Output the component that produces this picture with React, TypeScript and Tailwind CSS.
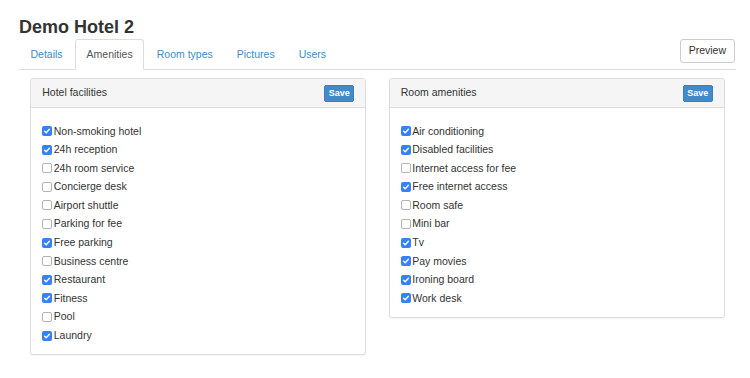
import React from "react";

type Item = { label: string; checked: boolean };

const hotelFacilities: Item[] = [
  { label: "Non-smoking hotel", checked: true },
  { label: "24h reception", checked: true },
  { label: "24h room service", checked: false },
  { label: "Concierge desk", checked: false },
  { label: "Airport shuttle", checked: false },
  { label: "Parking for fee", checked: false },
  { label: "Free parking", checked: true },
  { label: "Business centre", checked: false },
  { label: "Restaurant", checked: true },
  { label: "Fitness", checked: true },
  { label: "Pool", checked: false },
  { label: "Laundry", checked: true },
];

const roomAmenities: Item[] = [
  { label: "Air conditioning", checked: true },
  { label: "Disabled facilities", checked: true },
  { label: "Internet access for fee", checked: false },
  { label: "Free internet access", checked: true },
  { label: "Room safe", checked: false },
  { label: "Mini bar", checked: false },
  { label: "Tv", checked: true },
  { label: "Pay movies", checked: true },
  { label: "Ironing board", checked: true },
  { label: "Work desk", checked: true },
];

const tabs = ["Details", "Amenities", "Room types", "Pictures", "Users"];

function Box({ checked }: { checked: boolean }) {
  if (checked) {
    return (
      <span className="flex h-[10px] w-[10px] items-center justify-center rounded-[2px] bg-[#3382f6]">
        <svg width="8" height="8" viewBox="0 0 8 8" fill="none">
          <path d="M1.6 4.2 L3.2 5.8 L6.4 2.2" stroke="white" strokeWidth="1.4" strokeLinecap="round" strokeLinejoin="round" />
        </svg>
      </span>
    );
  }
  return <span className="h-[10px] w-[10px] rounded-[2px] border border-[#b4b4b4] bg-white" />;
}

function Panel({ title, items }: { title: string; items: Item[] }) {
  return (
    <div className="self-start rounded-[3px] border border-[#ddd] bg-white shadow-[0_1px_1px_rgba(0,0,0,0.05)]">
      <div className="flex h-[29px] items-center justify-between rounded-t-[3px] border-b border-[#ddd] bg-[#f5f5f5] pl-[11px] pr-[11px]">
        <span className="text-[10.5px] text-[#333]">{title}</span>
        <button className="h-[17px] rounded-[2px] border border-[#3a7fc0] bg-[#428bca] px-[3.5px] text-[9px] font-bold leading-[15px] text-white">
          Save
        </button>
      </div>
      <div className="flex flex-col gap-[3.6px] px-[11px] pb-[11px] pt-[15.5px]">
        {items.map((it) => (
          <label key={it.label} className="flex h-[15px] items-center gap-[1.5px] text-[10.5px] leading-[15px] text-[#333]">
            <Box checked={it.checked} />
            <span>{it.label}</span>
          </label>
        ))}
      </div>
    </div>
  );
}

export default function App() {
  return (
    <div className="min-h-screen bg-white pl-[19px] pr-[14px] font-['Liberation_Sans',Arial,sans-serif]">
      <h3 className="pt-[16.5px] text-[18px] font-bold leading-[20px] text-[#333]">Demo Hotel 2</h3>

      <div className="mt-[2.5px] flex border-b border-[#ddd]">
        {tabs.map((t) => {
          const active = t === "Amenities";
          return (
            <div key={t} className="-mb-px mr-[1px]">
              <span
                className={`block rounded-t-[3px] border px-[10.5px] py-[7px] text-[10.5px] leading-[15px] ${
                  active
                    ? "border-[#ddd] border-b-transparent bg-white text-[#555]"
                    : "border-transparent text-[#428bca]"
                }`}
              >
                {t}
              </span>
            </div>
          );
        })}
        <button className="ml-auto mr-px h-[24px] self-start rounded-[3px] border border-[#ccc] bg-white px-[8px] text-[10.5px] text-[#333]">
          Preview
        </button>
      </div>

      <div className="mt-[8px] grid grid-cols-2 items-start gap-[22.5px] px-[11.25px]">
        <Panel title="Hotel facilities" items={hotelFacilities} />
        <Panel title="Room amenities" items={roomAmenities} />
      </div>
    </div>
  );
}
